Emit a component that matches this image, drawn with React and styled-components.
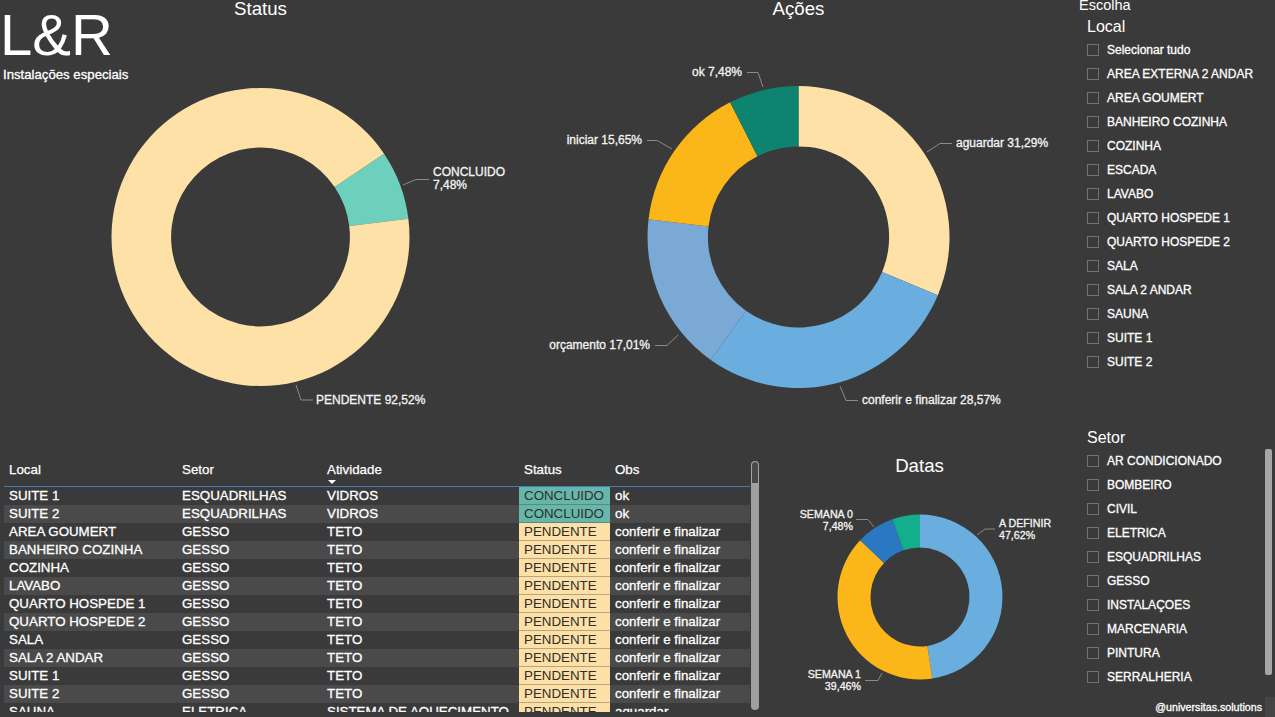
import React from 'react';
import styled, { createGlobalStyle } from 'styled-components';

const GlobalStyle = createGlobalStyle`
  html, body {
    margin: 0;
    padding: 0;
    background: #3a3a3a;
  }
  body {
    font-family: "Liberation Sans", Arial, sans-serif;
    color: #ffffff;
  }
`;

const Page = styled.div`
  width: 1275px;
  height: 717px;
  overflow: hidden;
  display: flex;
  background: #3a3a3a;
`;

const Main = styled.div`
  width: 1079px;
  display: flex;
  flex-direction: column;
`;

const TopRow = styled.div`
  height: 450px;
  display: flex;
`;

const BottomRow = styled.div`
  height: 267px;
  display: flex;
`;

/* ---------- chart visuals ---------- */

const Visual = styled.div`
  width: ${({ $w }) => $w}px;
  display: flex;
  flex-direction: column;
`;

// status chart shares its canvas with the brand block
const StackVisual = styled.div`
  width: 521px;
  display: grid;
  > * {
    grid-area: 1 / 1;
  }
`;

const Title = styled.div`
  font-size: 18.67px;
  line-height: ${({ $lh }) => $lh || 18}px;
  margin-top: ${({ $mt }) => $mt || 0}px;
  text-align: center;
  color: #ffffff;
`;

const Brand = styled.div`
  align-self: start;
  justify-self: start;
  display: flex;
  flex-direction: column;
  padding-top: 6px;
  z-index: 1;
`;

const Logo = styled.div`
  font-size: 58px;
  line-height: 58px;
`;

const Subtitle = styled.div`
  font-size: 13.2px;
  line-height: 14px;
  margin: 4px 0 0 3px;
  -webkit-text-stroke: 0.3px #ffffff;
`;

/* ---------- table ---------- */

const COLS = '173px 145px 197px 91px 140px';

const TableVisual = styled.div`
  width: 756px;
  margin-left: 4px;
  padding-top: 10px;
  display: flex;
`;

const Table = styled.div`
  width: 746px;
  display: flex;
  flex-direction: column;
`;

const HeaderRow = styled.div`
  display: grid;
  grid-template-columns: ${COLS};
  height: 26px;
  border-bottom: 1px solid #3f7fc0;
`;

const HeadCell = styled.div`
  padding: 2px 5px 0;
  font-size: 13.33px;
  line-height: 16px;
  -webkit-text-stroke: 0.25px #ffffff;
`;

const SortArrow = styled.div`
  width: 0;
  height: 0;
  margin: 2px 0 0 1px;
  border-left: 4px solid transparent;
  border-right: 4px solid transparent;
  border-top: 4px solid #ffffff;
`;

const Body = styled.div`
  height: 225px;
  overflow: hidden;
`;

const Row = styled.div`
  display: grid;
  grid-template-columns: ${COLS};
  height: 18px;
  background: ${({ $alt }) => ($alt ? '#4a4a4a' : '#3a3a3a')};
`;

const Cell = styled.div`
  padding: 0 5px;
  font-size: 13.33px;
  line-height: 18px;
  white-space: nowrap;
  overflow: hidden;
  -webkit-text-stroke: 0.3px #ffffff;
`;

const StatusCell = styled(Cell)`
  background: ${({ $done }) => ($done ? '#67b6aa' : '#fde0a6')};
  color: #2e2e2e;
  -webkit-text-stroke: 0;
  box-shadow: inset 0 -1px 0 rgba(58, 58, 58, 0.35);
`;

const TableScroll = styled.div`
  width: 8px;
  height: 249px;
  margin: 1px 0 0 1px;
  border-radius: 4px;
  background: #9f9f9f;
  display: flex;
  flex-direction: column;
  overflow: hidden;
`;

const ScrollCap = styled.div`
  height: 23px;
  box-sizing: border-box;
  border: 1px solid #a3a3a3;
  border-radius: 4px 4px 0 0;
  background: #484848;
`;

/* ---------- slicers ---------- */

const SideColumn = styled.div`
  width: 196px;
  display: flex;
  flex-direction: column;
`;

const SideHeading = styled.div`
  font-size: 14.5px;
  line-height: 14px;
  margin-top: -2px;
`;

const Slicer = styled.div`
  padding-left: 8px;
  margin-top: ${({ $mt }) => $mt}px;
`;

const SlicerTitle = styled.div`
  font-size: 16px;
  line-height: 18px;
`;

const SlicerBody = styled.div`
  display: flex;
  margin-top: 2px;
`;

const ItemList = styled.div`
  flex: 1;
  display: flex;
  flex-direction: column;
`;

const Item = styled.div`
  height: 24px;
  display: flex;
  align-items: center;
  gap: 8px;
  font-size: 12px;
  line-height: 24px;
  white-space: nowrap;
  -webkit-text-stroke: 0.3px #ffffff;
`;

const Box = styled.span`
  width: 12px;
  height: 12px;
  box-sizing: border-box;
  border: 1px solid #727272;
`;

const SlicerScroll = styled.div`
  width: 7px;
  height: 226px;
  margin-right: 3px;
  border-radius: 2px;
  background: #a6a6a6;
`;

const Footer = styled.div`
  margin-top: auto;
  height: 20px;
  display: flex;
  justify-content: flex-end;
  align-items: center;
`;

const Credit = styled.span`
  font-size: 10.67px;
  margin-right: 3px;
  -webkit-text-stroke: 0.3px #ffffff;
`;

const Corner = styled.span`
  width: 10px;
  height: 20px;
  background: #454545;
`;

/* ---------- donut drawing ---------- */

function polar(cx, cy, r, deg) {
  const a = (deg * Math.PI) / 180;
  return [cx + r * Math.sin(a), cy - r * Math.cos(a)];
}

function arcPath(cx, cy, r, ir, a0, a1) {
  const large = a1 - a0 > 180 ? 1 : 0;
  const [x0, y0] = polar(cx, cy, r, a0);
  const [x1, y1] = polar(cx, cy, r, a1);
  const [x2, y2] = polar(cx, cy, ir, a1);
  const [x3, y3] = polar(cx, cy, ir, a0);
  return `M${x0} ${y0} A${r} ${r} 0 ${large} 1 ${x1} ${y1} L${x2} ${y2} A${ir} ${ir} 0 ${large} 0 ${x3} ${y3} Z`;
}

function Donut({ origin, width, height, cx, cy, r, start = 0, slices, labels, fontSize = 12 }) {
  let angle = start;
  const ir = r * 0.6;
  return (
    <svg width={width} height={height} style={{ display: 'block', overflow: 'visible' }}>
      <g transform={`translate(${-origin[0]} ${-origin[1]})`}>
        {slices.map((s) => {
          const a0 = angle;
          angle += s.pct * 3.6;
          return <path key={s.name} d={arcPath(cx, cy, r, ir, a0, angle)} fill={s.color} />;
        })}
        {labels.map((l) => (
          <g key={l.lines[0]}>
            <polyline points={l.leader} fill="none" stroke="#8a8a8a" strokeWidth="1" />
            <text
              textAnchor={l.anchor || 'start'}
              fontSize={fontSize}
              fill="#f4f4f4"
              stroke="#f4f4f4"
              strokeWidth="0.3"
              fontFamily='"Liberation Sans", Arial, sans-serif'>
              {l.lines.map((t, i) => (
                <tspan key={t} x={l.x} y={l.y + i * (l.gap || 13)}>
                  {t}
                </tspan>
              ))}
            </text>
          </g>
        ))}
      </g>
    </svg>
  );
}

const YELLOW = '#fde1a6';
const LIGHT_BLUE = '#6aaee0';
const ORANGE = '#fbb61a';

const statusSlices = [
  { name: 'CONCLUIDO', pct: 7.48, color: '#6dd0bd' },
  { name: 'PENDENTE', pct: 92.52, color: YELLOW },
];

const statusLabels = [
  { lines: ['CONCLUIDO', '7,48%'], x: 433, y: 176, leader: '403,185 416,179.5 429,179.5' },
  { lines: ['PENDENTE 92,52%'], x: 316, y: 404, leader: '296,385 301,400 313,400' },
];

const acoesSlices = [
  { name: 'aguardar', pct: 31.29, color: YELLOW },
  { name: 'conferir', pct: 28.57, color: LIGHT_BLUE },
  { name: 'orcamento', pct: 17.01, color: '#7aa9d6' },
  { name: 'iniciar', pct: 15.65, color: ORANGE },
  { name: 'ok', pct: 7.48, color: '#0e836f' },
];

const acoesLabels = [
  { lines: ['aguardar 31,29%'], x: 956, y: 147, leader: '927,152 940,143.5 952,143.5' },
  { lines: ['conferir e finalizar 28,57%'], x: 862, y: 404, leader: '840,386 846,400.5 858,400.5' },
  { lines: ['orçamento 17,01%'], x: 650, y: 349, anchor: 'end', leader: '655,345.5 667,345.5 678,335' },
  { lines: ['iniciar 15,65%'], x: 642, y: 144, anchor: 'end', leader: '647,140.5 657,140.5 672,149' },
  { lines: ['ok 7,48%'], x: 742, y: 76, anchor: 'end', leader: '747,72.5 758,72.5 763,87' },
];

const datasSlices = [
  { name: 'A DEFINIR', pct: 47.62, color: LIGHT_BLUE },
  { name: 'SEMANA 1', pct: 39.46, color: ORANGE },
  { name: 'SEMANA 0', pct: 7.48, color: '#2b78c2' },
  { name: 'outros', pct: 5.44, color: '#13ae8c' },
];

const datasLabels = [
  { lines: ['A DEFINIR', '47,62%'], x: 999, y: 527, gap: 12.3, leader: '977,535 985,529 995,529' },
  { lines: ['SEMANA 0', '7,48%'], x: 853, y: 517.5, gap: 12, anchor: 'end', leader: '856,519.5 868,519.5 874,527' },
  { lines: ['SEMANA 1', '39,46%'], x: 861, y: 678, gap: 12.3, anchor: 'end', leader: '865,680.5 878,680.5 882,673' },
];

/* ---------- data ---------- */

const rows = [
  ['SUITE 1', 'ESQUADRILHAS', 'VIDROS', 'CONCLUIDO', 'ok'],
  ['SUITE 2', 'ESQUADRILHAS', 'VIDROS', 'CONCLUIDO', 'ok'],
  ['AREA GOUMERT', 'GESSO', 'TETO', 'PENDENTE', 'conferir e finalizar'],
  ['BANHEIRO COZINHA', 'GESSO', 'TETO', 'PENDENTE', 'conferir e finalizar'],
  ['COZINHA', 'GESSO', 'TETO', 'PENDENTE', 'conferir e finalizar'],
  ['LAVABO', 'GESSO', 'TETO', 'PENDENTE', 'conferir e finalizar'],
  ['QUARTO HOSPEDE 1', 'GESSO', 'TETO', 'PENDENTE', 'conferir e finalizar'],
  ['QUARTO HOSPEDE 2', 'GESSO', 'TETO', 'PENDENTE', 'conferir e finalizar'],
  ['SALA', 'GESSO', 'TETO', 'PENDENTE', 'conferir e finalizar'],
  ['SALA 2 ANDAR', 'GESSO', 'TETO', 'PENDENTE', 'conferir e finalizar'],
  ['SUITE 1', 'GESSO', 'TETO', 'PENDENTE', 'conferir e finalizar'],
  ['SUITE 2', 'GESSO', 'TETO', 'PENDENTE', 'conferir e finalizar'],
  ['SAUNA', 'ELETRICA', 'SISTEMA DE AQUECIMENTO', 'PENDENTE', 'aguardar'],
];

const locais = [
  'Selecionar tudo',
  'AREA EXTERNA 2 ANDAR',
  'AREA GOUMERT',
  'BANHEIRO COZINHA',
  'COZINHA',
  'ESCADA',
  'LAVABO',
  'QUARTO HOSPEDE 1',
  'QUARTO HOSPEDE 2',
  'SALA',
  'SALA 2 ANDAR',
  'SAUNA',
  'SUITE 1',
  'SUITE 2',
];

const setores = [
  'AR CONDICIONADO',
  'BOMBEIRO',
  'CIVIL',
  'ELETRICA',
  'ESQUADRILHAS',
  'GESSO',
  'INSTALAÇOES',
  'MARCENARIA',
  'PINTURA',
  'SERRALHERIA',
];

function App() {
  return (
    <Page>
      <GlobalStyle />
      <Main>
        <TopRow>
          <StackVisual>
            <Visual $w={521}>
              <Title>Status</Title>
              <Donut
                origin={[0, 18]}
                width={521}
                height={432}
                cx={260.5}
                cy={237}
                r={149}
                start={56}
                slices={statusSlices}
                labels={statusLabels}
              />
            </Visual>
            <Brand>
              <Logo>L&amp;R</Logo>
              <Subtitle>Instalações especiais</Subtitle>
            </Brand>
          </StackVisual>
          <Visual $w={555}>
            <Title>Ações</Title>
            <Donut
              origin={[521, 18]}
              width={555}
              height={432}
              cx={798.5}
              cy={237}
              r={151}
              slices={acoesSlices}
              labels={acoesLabels}
            />
          </Visual>
        </TopRow>
        <BottomRow>
          <TableVisual>
            <Table>
              <HeaderRow>
                <HeadCell>Local</HeadCell>
                <HeadCell>Setor</HeadCell>
                <HeadCell>
                  Atividade
                  <SortArrow />
                </HeadCell>
                <HeadCell>Status</HeadCell>
                <HeadCell>Obs</HeadCell>
              </HeaderRow>
              <Body>
                {rows.map((r, idx) => (
                  <Row key={idx} $alt={idx % 2 === 1}>
                    <Cell>{r[0]}</Cell>
                    <Cell>{r[1]}</Cell>
                    <Cell>{r[2]}</Cell>
                    <StatusCell $done={r[3] === 'CONCLUIDO'}>{r[3]}</StatusCell>
                    <Cell>{r[4]}</Cell>
                  </Row>
                ))}
              </Body>
            </Table>
            <TableScroll>
              <ScrollCap />
            </TableScroll>
          </TableVisual>
          <Visual $w={319}>
            <Title $lh={20} $mt={6}>
              Datas
            </Title>
            <Donut
              origin={[760, 476]}
              width={319}
              height={241}
              cx={920}
              cy={597}
              r={82.5}
              slices={datasSlices}
              labels={datasLabels}
              fontSize={10.67}
            />
          </Visual>
        </BottomRow>
      </Main>
      <SideColumn>
        <SideHeading>Escolha</SideHeading>
        <Slicer $mt={6}>
          <SlicerTitle>Local</SlicerTitle>
          <SlicerBody>
            <ItemList>
              {locais.map((el) => (
                <Item key={el}>
                  <Box />
                  {el}
                </Item>
              ))}
            </ItemList>
          </SlicerBody>
        </Slicer>
        <Slicer $mt={55}>
          <SlicerTitle>Setor</SlicerTitle>
          <SlicerBody>
            <ItemList>
              {setores.map((el) => (
                <Item key={el}>
                  <Box />
                  {el}
                </Item>
              ))}
            </ItemList>
            <SlicerScroll />
          </SlicerBody>
        </Slicer>
        <Footer>
          <Credit>@universitas.solutions</Credit>
          <Corner />
        </Footer>
      </SideColumn>
    </Page>
  );
}

export default App;
